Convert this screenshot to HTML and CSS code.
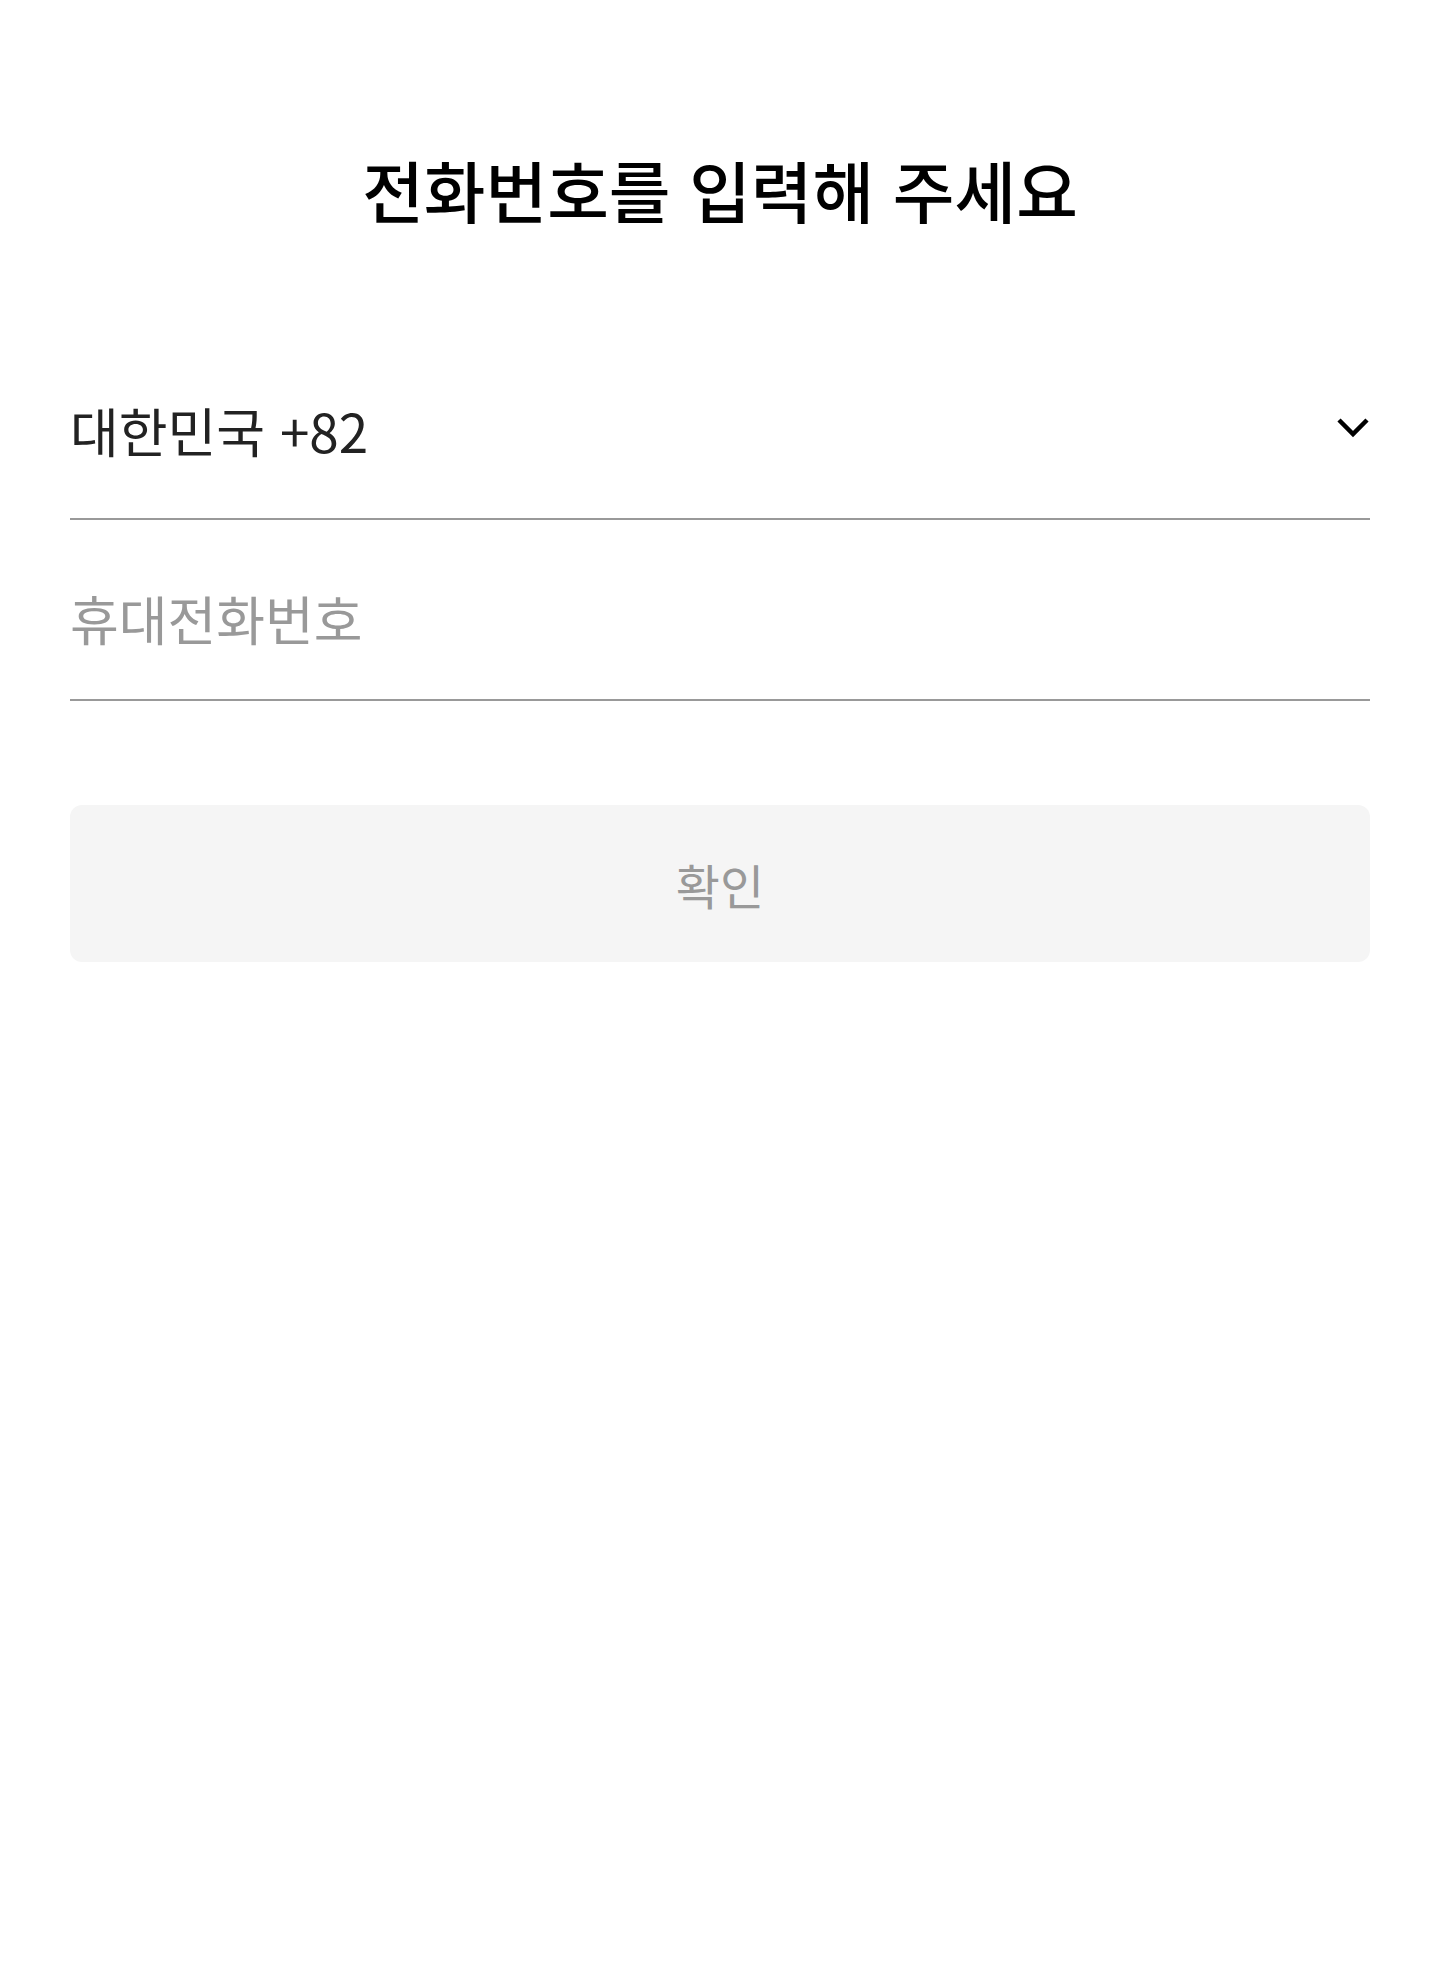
FILE: index.html
```html
<!DOCTYPE html>
<html lang="ko">
<head>
    <meta charset="UTF-8">
    <meta name="viewport" content="width=device-width, initial-scale=1.0">
    <title>전화번호 입력</title>
    <link rel="stylesheet" href="styles.css">
</head>
<body>
    <div class="page">
        <h1 class="title">전화번호를 입력해 주세요</h1>

        <!-- country code select -->
        <div class="field select-row">
            <span class="country">대한민국 +82</span>
            <svg class="chevron" width="34" height="22" viewBox="0 0 34 22">
                <path d="M3 4 L17 18 L31 4" fill="none" stroke="#000" stroke-width="4.5"/>
            </svg>
        </div>

        <div class="field input-row">
            <input type="tel" class="phone" placeholder="휴대전화번호">
        </div>

        <button class="confirm" disabled>확인</button>
    </div>
</body>
</html>
```

FILE: styles.css
```css
body {
    margin: 0;
    background: #fff;
    font-family: "Noto Sans CJK KR", "Noto Sans", sans-serif;
}
.page {
    display: flex;
    flex-direction: column;
    padding: 149px 70px 0;
}
.title {
    margin: 0;
    font-size: 67px;
    font-weight: 500;
    line-height: 80px;
    text-align: center;
    color: #000;
}
.field {
    display: flex;
    align-items: center;
    justify-content: space-between;
    border-bottom: 2px solid #999;
}
.select-row {
    margin-top: 169px;
    padding-bottom: 56px;
}
.input-row {
    padding-top: 66px;
    padding-bottom: 49px;
}
.country {
    font-size: 53px;
    line-height: 64px;
    color: #222;
}
.chevron {
    margin-bottom: 6px;
}
.phone {
    width: 100%;
    border: none;
    outline: none;
    padding: 0;
    font-family: inherit;
    font-size: 53px;
    line-height: 64px;
    height: 64px;
    color: #222;
    background: transparent;
}
.phone::placeholder {
    color: #999;
}
.confirm {
    margin-top: 104px;
    height: 157px;
    border: none;
    border-radius: 12px;
    background: #f5f5f5;
    font-family: inherit;
    font-size: 48px;
    color: #999;
}
```
